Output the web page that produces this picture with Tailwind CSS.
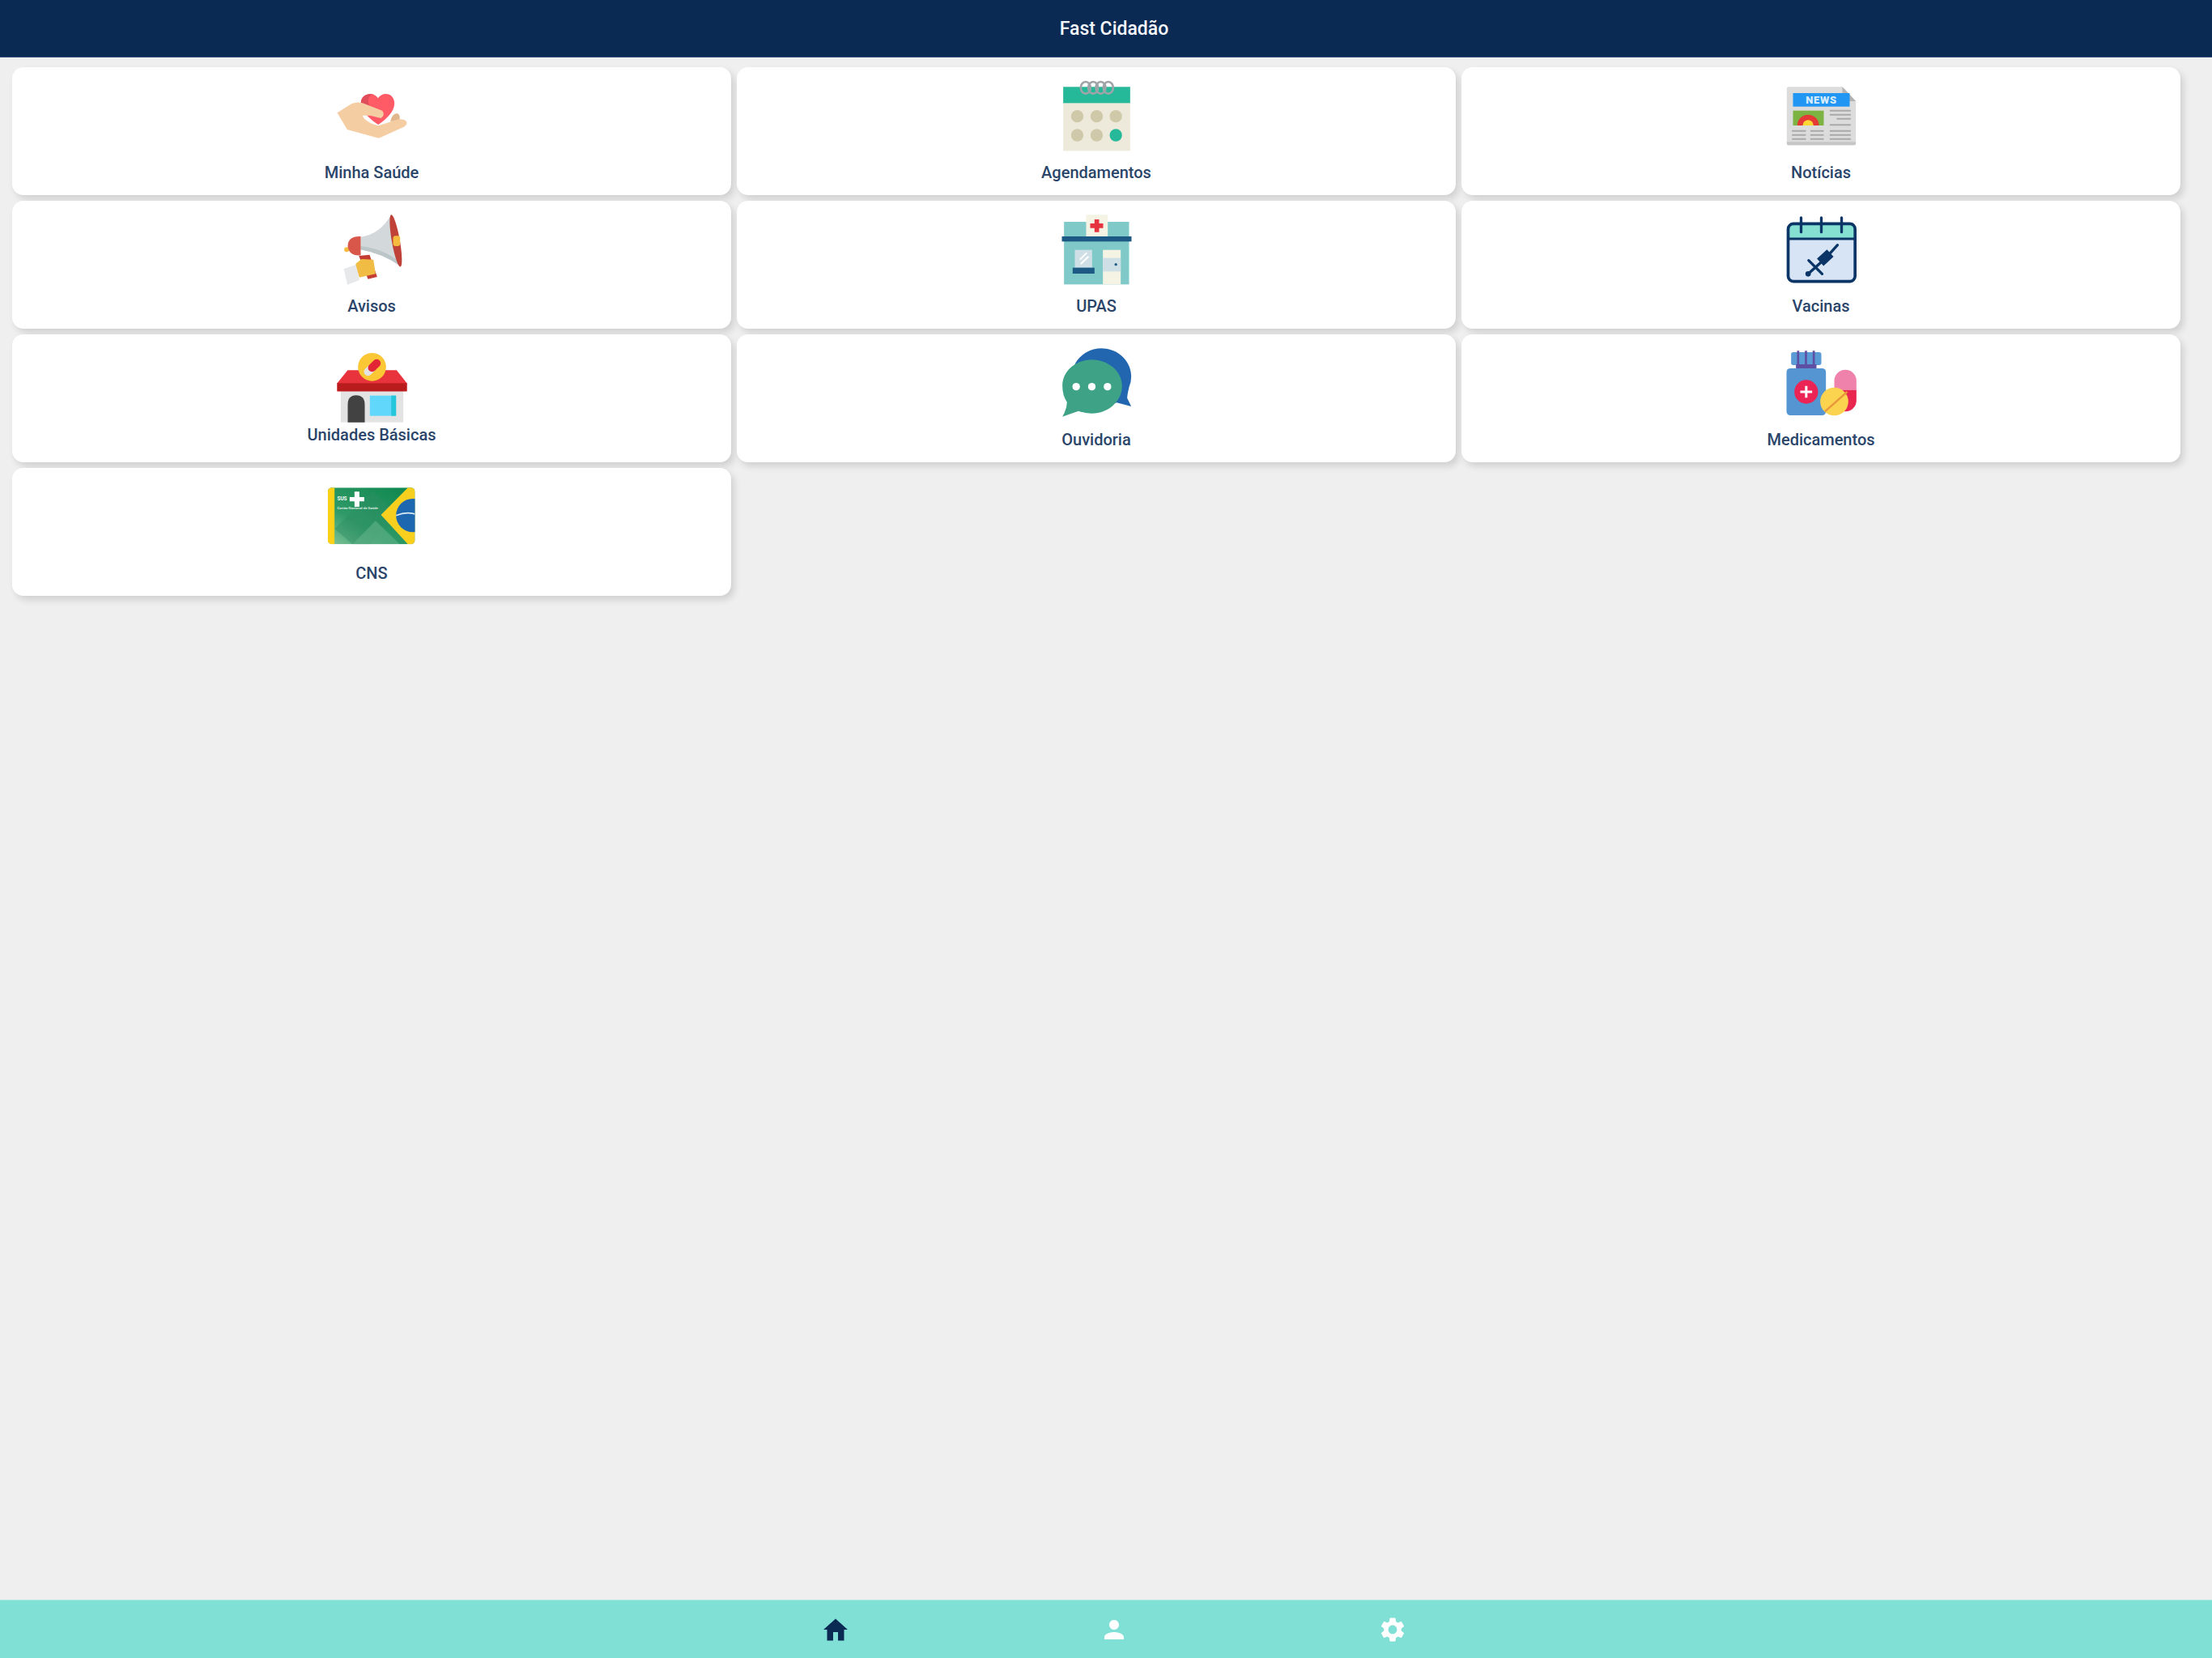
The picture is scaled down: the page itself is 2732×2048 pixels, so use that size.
<!DOCTYPE html>
<html lang="pt">
<head>
<meta charset="utf-8">
<title>Fast Cidadão</title>
<script src="https://cdn.jsdelivr.net/npm/@tailwindcss/browser@4"></script>
</head>
<body class="overflow-hidden bg-[#efefef] font-['Roboto',sans-serif]">
<div class="h-[2048px] w-[2732px] overflow-hidden">
<div class="flex h-[2048px] w-[2752px] flex-col">
  <header class="flex h-[71px] items-center justify-center border-b border-[#33507a] bg-[#0a2a54] pt-[2px] text-[23px] font-medium text-[#f4f6f9]">Fast Cidadão</header>
  <main class="grid flex-1 grid-cols-[repeat(3,888px)] auto-rows-[158px] content-start gap-x-[7px] gap-y-[7px] pl-[15px] pt-[12px] text-[20px] font-medium leading-6 text-[#2a4569]">

    <a class="flex flex-col items-center rounded-[14px] bg-white pt-3 shadow-[4px_5px_8px_rgba(0,0,0,0.13)]">
      <svg class="h-[100px] w-[120px]" viewBox="115.5 15 360 300">
        <path d="M320 192C288 170 256 142 256 110C256 90 274 78 292 78C303 78 312 84 319 94C326 84 336 78 348 78C366 78 380 92 380 113C380 142 352 170 320 192Z" fill="#fe5b66"/>
        <path d="M292 78C274 78 256 90 256 110C256 122 261 134 270 145L290 125C278 108 282 90 296 79Z" fill="#e14c5a"/>
        <path d="M365 180Q372 150 390 150Q404 156 398 176Z" fill="#e2b68c"/>
        <path d="M168 148L222 114Q240 106 262 112L335 140Q347 155 330 168L290 158H262Q268 180 320 196L395 172Q425 170 426 186Q424 198 405 205L322 242L205 210Z" fill="#f5cda3"/>
      </svg>
      <span class="mt-1.5">Minha Saúde</span>
    </a>

    <a class="flex flex-col items-center rounded-[14px] bg-white pt-3 shadow-[4px_5px_8px_rgba(0,0,0,0.13)]">
      <svg class="h-[100px] w-[120px]" viewBox="160.5 75 360 300">
        <rect x="218" y="112" width="248" height="237" fill="#eeeadb"/>
        <rect x="218" y="112" width="248" height="60" fill="#25b99a"/>
        <g fill="#cfc9a9"><circle cx="270" cy="221" r="23"/><circle cx="342" cy="221" r="23"/><circle cx="413" cy="221" r="23"/><circle cx="270" cy="291" r="23"/><circle cx="342" cy="291" r="23"/></g>
        <circle cx="413" cy="291" r="23" fill="#25b99a"/>
        <g fill="none" stroke="#9fa4a8" stroke-width="8"><ellipse cx="301" cy="115" rx="18" ry="22"/><ellipse cx="329" cy="115" rx="18" ry="22"/><ellipse cx="357" cy="115" rx="18" ry="22"/><ellipse cx="385" cy="115" rx="18" ry="22"/></g>
      </svg>
      <span class="mt-1.5">Agendamentos</span>
    </a>

    <a class="flex flex-col items-center rounded-[14px] bg-white pt-3 shadow-[4px_5px_8px_rgba(0,0,0,0.13)]">
      <svg class="h-[100px] w-[120px]" viewBox="25.5 75 360 300">
        <path d="M79 120Q79 112 87 112H285L335 165V320Q335 328 327 328H87Q79 328 79 320Z" fill="#dcdcdc"/>
        <path d="M79 316H335V320Q335 328 327 328H87Q79 328 79 320Z" fill="#c6c6c6"/>
        <path d="M285 112L335 165H285Z" fill="#b3b3b3"/>
        <rect x="102" y="135" width="210" height="50" fill="#2196f3"/>
        <text x="207" y="174" text-anchor="middle" font-family="Roboto,sans-serif" font-weight="900" font-size="39" letter-spacing="2" fill="#d6ecfb">NEWS</text>
        <rect x="102" y="200" width="114" height="55" fill="#7cb342"/>
        <path d="M118 255A40 40 0 0 1 198 255Z" fill="#e53935"/>
        <path d="M138 255A20 20 0 0 1 178 255Z" fill="#fdd835"/>
        <g stroke="#a9a9a9" stroke-width="6"><path d="M238 200H316M238 215H316M264 230H316M238 253H316M238 275H316M238 290H316M238 305H316M98 275H150M166 275H216M98 290H150M166 290H216M98 305H150M166 305H216"/></g>
      </svg>
      <span class="mt-1.5">Notícias</span>
    </a>

    <a class="flex flex-col items-center rounded-[14px] bg-white pt-3 shadow-[4px_5px_8px_rgba(0,0,0,0.13)]">
      <svg class="h-[100px] w-[120px]" viewBox="115.5 510 360 300">
        <path d="M255 608Q325 600 368 526L404 718Q340 670 255 655Z" fill="#d3d9db"/>
        <path d="M255 655Q340 670 404 718L398 700Q340 652 255 642Z" fill="#bcc5c8"/>
        <ellipse cx="385" cy="622" rx="15" ry="98" transform="rotate(-10 385 622)" fill="#bf4137"/>
        <rect x="375" y="604" width="26" height="38" rx="9" fill="#f4bb3e"/>
        <circle cx="203" cy="655" r="9" fill="#f4bb3e"/>
        <path d="M255 606Q208 604 207 642Q212 680 255 676Z" fill="#d9564a"/>
        <path d="M248 678L288 674L316 756L282 764Z" fill="#c43c34"/>
        <path d="M192 726L240 710L250 768L206 785Z" fill="#e6e8e9"/>
        <path d="M236 708L258 690L302 692L310 745L250 758Z" fill="#f0bc44"/>
      </svg>
      <span class="mt-1.5">Avisos</span>
    </a>

    <a class="flex flex-col items-center rounded-[14px] bg-white pt-3 shadow-[4px_5px_8px_rgba(0,0,0,0.13)]">
      <svg class="h-[100px] w-[120px]" viewBox="160.5 570 360 300">
        <rect x="221" y="612" width="241" height="232" fill="#7fcac8"/>
        <rect x="303" y="586" width="80" height="80" fill="#f4f3e4"/>
        <path d="M334 603H351V618H366V635H351V650H334V635H318V618H334Z" fill="#e5343f"/>
        <rect x="213" y="666" width="258" height="19" fill="#1c5a85"/>
        <rect x="261" y="716" width="64" height="66" fill="#cfdfe6"/>
        <path d="M280 752L305 727M283 768L312 740" stroke="#fff" stroke-width="6"/>
        <rect x="253" y="782" width="81" height="22" fill="#1c5a85"/>
        <rect x="365" y="716" width="66" height="128" fill="#f4f3e4"/>
        <rect x="365" y="746" width="66" height="50" fill="#cfdfe6"/>
        <circle cx="413" cy="770" r="5" fill="#1c5a85"/>
      </svg>
      <span class="mt-1.5">UPAS</span>
    </a>

    <a class="flex flex-col items-center rounded-[14px] bg-white pt-3 shadow-[4px_5px_8px_rgba(0,0,0,0.13)]">
      <svg class="h-[100px] w-[120px]" viewBox="25.5 570 360 300">
        <rect x="84" y="619" width="248" height="214" rx="20" fill="#d7e4f5"/>
        <path d="M84 675V639Q84 619 104 619H312Q332 619 332 639V675Z" fill="#85e0d1"/>
        <rect x="84" y="619" width="248" height="214" rx="20" fill="none" stroke="#0a3566" stroke-width="11"/>
        <path d="M84 675H332" stroke="#0a3566" stroke-width="9"/>
        <path d="M132 597V650M207 597V650M282 597V650" stroke="#0a3566" stroke-width="10" stroke-linecap="round"/>
        <path d="M203 762L240 728" stroke="#0a3566" stroke-width="36"/>
        <path d="M238 730L267 698M160 803L210 758M160 755L210 805" stroke="#0a3566" stroke-width="10" stroke-linecap="round"/>
        <circle cx="158" cy="805" r="10" fill="#0a3566"/>
      </svg>
      <span class="mt-1.5">Vacinas</span>
    </a>

    <a class="flex flex-col items-center rounded-[14px] bg-white pt-3 shadow-[4px_5px_8px_rgba(0,0,0,0.13)]">
      <svg class="h-[100px] w-[120px]" viewBox="115.5 15 360 300">
        <rect x="181" y="188" width="232" height="117" fill="#e3e3e3"/>
        <path d="M207 112H388L426 160V190H168V160Z" fill="#e8333c"/>
        <rect x="168" y="160" width="258" height="30" fill="#b91c1c"/>
        <path d="M207 305V240Q207 205 238 205Q270 205 270 240V305Z" fill="#424242"/>
        <rect x="289" y="206" width="97" height="75" fill="#61d8fb"/>
        <rect x="368" y="206" width="18" height="75" fill="#26c6da"/>
        <circle cx="297" cy="100" r="52" fill="#fbc735"/>
        <path d="M282 118L297 103" stroke="#e3e3e3" stroke-width="30" stroke-linecap="round"/>
        <path d="M297 103L314 86" stroke="#e32636" stroke-width="30" stroke-linecap="round"/>
      </svg>
      <span>Unidades Básicas</span>
    </a>

    <a class="flex flex-col items-center rounded-[14px] bg-white pt-3 shadow-[4px_5px_8px_rgba(0,0,0,0.13)]">
      <svg class="h-[100px] w-[120px]" viewBox="40.5 45 360 300">
        <path d="M130 170A110 105 0 1 1 342 205Q335 235 335 245L350 276L296 262Q260 275 240 275Z" fill="#2166ae"/>
        <path d="M95 200C95 145 145 103 204 103C263 103 316 145 316 200C316 258 263 302 204 302Q180 302 155 293L95 314Q112 285 112 260Q95 235 95 200Z" fill="#3ea287"/>
        <g fill="#fff"><circle cx="146" cy="203" r="14"/><circle cx="204" cy="203" r="14"/><circle cx="262" cy="203" r="14"/></g>
      </svg>
      <span class="mt-1.5">Ouvidoria</span>
    </a>

    <a class="flex flex-col items-center rounded-[14px] bg-white pt-3 shadow-[4px_5px_8px_rgba(0,0,0,0.13)]">
      <svg class="h-[100px] w-[120px]" viewBox="25.5 45 360 300">
        <rect x="95" y="75" width="112" height="48" rx="8" fill="#5b9bd5"/>
        <path d="M121 70V125M150 70V125M179 70V125" stroke="#5e4fa2" stroke-width="8"/>
        <rect x="113" y="120" width="76" height="20" fill="#5e4fa2"/>
        <rect x="78" y="135" width="146" height="174" rx="14" fill="#5596d2"/>
        <circle cx="151" cy="222" r="44" fill="#ec2456"/>
        <path d="M151 200V244M129 222H173" stroke="#fff" stroke-width="9"/>
        <path d="M255 215V181A41 41 0 0 1 337 181V215Z" fill="#ef82ab"/>
        <path d="M255 215H337V254A41 41 0 0 1 255 254Z" fill="#e8264f"/>
        <circle cx="255" cy="258" r="52" fill="#fbd34f"/>
        <path d="M220 295L303 222" stroke="#e8973a" stroke-width="7"/>
      </svg>
      <span class="mt-1.5">Medicamentos</span>
    </a>

    <a class="flex flex-col items-center rounded-[14px] bg-white pt-3 shadow-[4px_5px_8px_rgba(0,0,0,0.13)]">
      <svg class="h-[100px] w-[120px]" viewBox="115.5 510 360 300">
        <defs>
          <linearGradient id="cnsGreen" x1="0" y1="1" x2="1" y2="0"><stop offset="0" stop-color="#82c49b"/><stop offset="0.35" stop-color="#2f9a68"/><stop offset="1" stop-color="#0d864c"/></linearGradient>
          <clipPath id="cnsCard"><rect x="133" y="547" width="323" height="210" rx="15"/></clipPath>
        </defs>
        <g clip-path="url(#cnsCard)">
          <rect x="133" y="547" width="323" height="210" fill="url(#cnsGreen)"/>
          <path d="M158 700L300 560L395 650L290 757H225Z" fill="#2f8f63" opacity=".45"/>
          <path d="M225 757L310 670L400 757Z" fill="#62b288" opacity=".6"/>
          <rect x="133" y="547" width="25" height="210" fill="#fdd117"/>
          <path d="M330 648L430 547H456V757H430Z" fill="#f6cf1f"/>
          <circle cx="448" cy="650" r="62" fill="#1c67b0"/>
          <path d="M386 650Q425 635 456 645" stroke="#dbe9f3" stroke-width="5" fill="none"/>
          <path d="M232 562H250V582H268V598H250V618H232V598H214V582H232Z" fill="#fff"/>
          <text x="168" y="594" font-family="Roboto,sans-serif" font-weight="700" font-size="19" fill="#fff">SUS</text>
          <text x="168" y="626" font-family="Roboto,sans-serif" font-size="13" fill="#e9f4ee">Cartão Nacional de Saúde</text>
        </g>
      </svg>
      <span class="mt-1.5">CNS</span>
    </a>
  </main>
  <footer class="h-[72px] border-t border-[#a4e9e1] bg-[#80e0d5]">
    <nav class="mx-auto grid h-full w-[1032px] grid-cols-3 place-items-center">
      <svg class="h-9 w-9" viewBox="0 0 24 24" fill="#0a2a54"><path d="M10 21v-7h4v7h5v-9h3L12 3 2 12h3v9z"/></svg>
      <svg class="h-9 w-9" viewBox="0 0 24 24" fill="#fff"><path d="M12 12c2.21 0 4-1.79 4-4s-1.79-4-4-4-4 1.79-4 4 1.79 4 4 4zm0 2c-2.67 0-8 1.34-8 4v2h16v-2c0-2.66-5.33-4-8-4z"/></svg>
      <svg class="h-9 w-9" viewBox="0 0 24 24" fill="#fff"><path d="M19.14 12.94c.04-.3.06-.61.06-.94 0-.32-.02-.64-.07-.94l2.03-1.58c.18-.14.23-.41.12-.61l-1.92-3.32c-.12-.22-.37-.29-.59-.22l-2.39.96c-.5-.38-1.03-.7-1.62-.94l-.36-2.54c-.04-.24-.24-.41-.48-.41h-3.84c-.24 0-.43.17-.47.41l-.36 2.54c-.59.24-1.13.57-1.62.94l-2.39-.96c-.22-.08-.47 0-.59.22L2.74 8.87c-.12.21-.08.47.12.61l2.03 1.58c-.05.3-.09.63-.09.94s.02.64.07.94l-2.03 1.58c-.18.14-.23.41-.12.61l1.92 3.32c.12.22.37.29.59.22l2.39-.96c.5.38 1.03.7 1.62.94l.36 2.54c.05.24.24.41.48.41h3.84c.24 0 .44-.17.47-.41l.36-2.54c.59-.24 1.13-.56 1.62-.94l2.39.96c.22.08.47 0 .59-.22l1.92-3.32c.12-.22.07-.47-.12-.61l-2.01-1.58zM12 15.6c-1.98 0-3.6-1.62-3.6-3.6s1.62-3.6 3.6-3.6 3.6 1.62 3.6 3.6-1.62 3.6-3.6 3.6z"/></svg>
    </nav>
  </footer>
</div>
</div>
</body>
</html>
